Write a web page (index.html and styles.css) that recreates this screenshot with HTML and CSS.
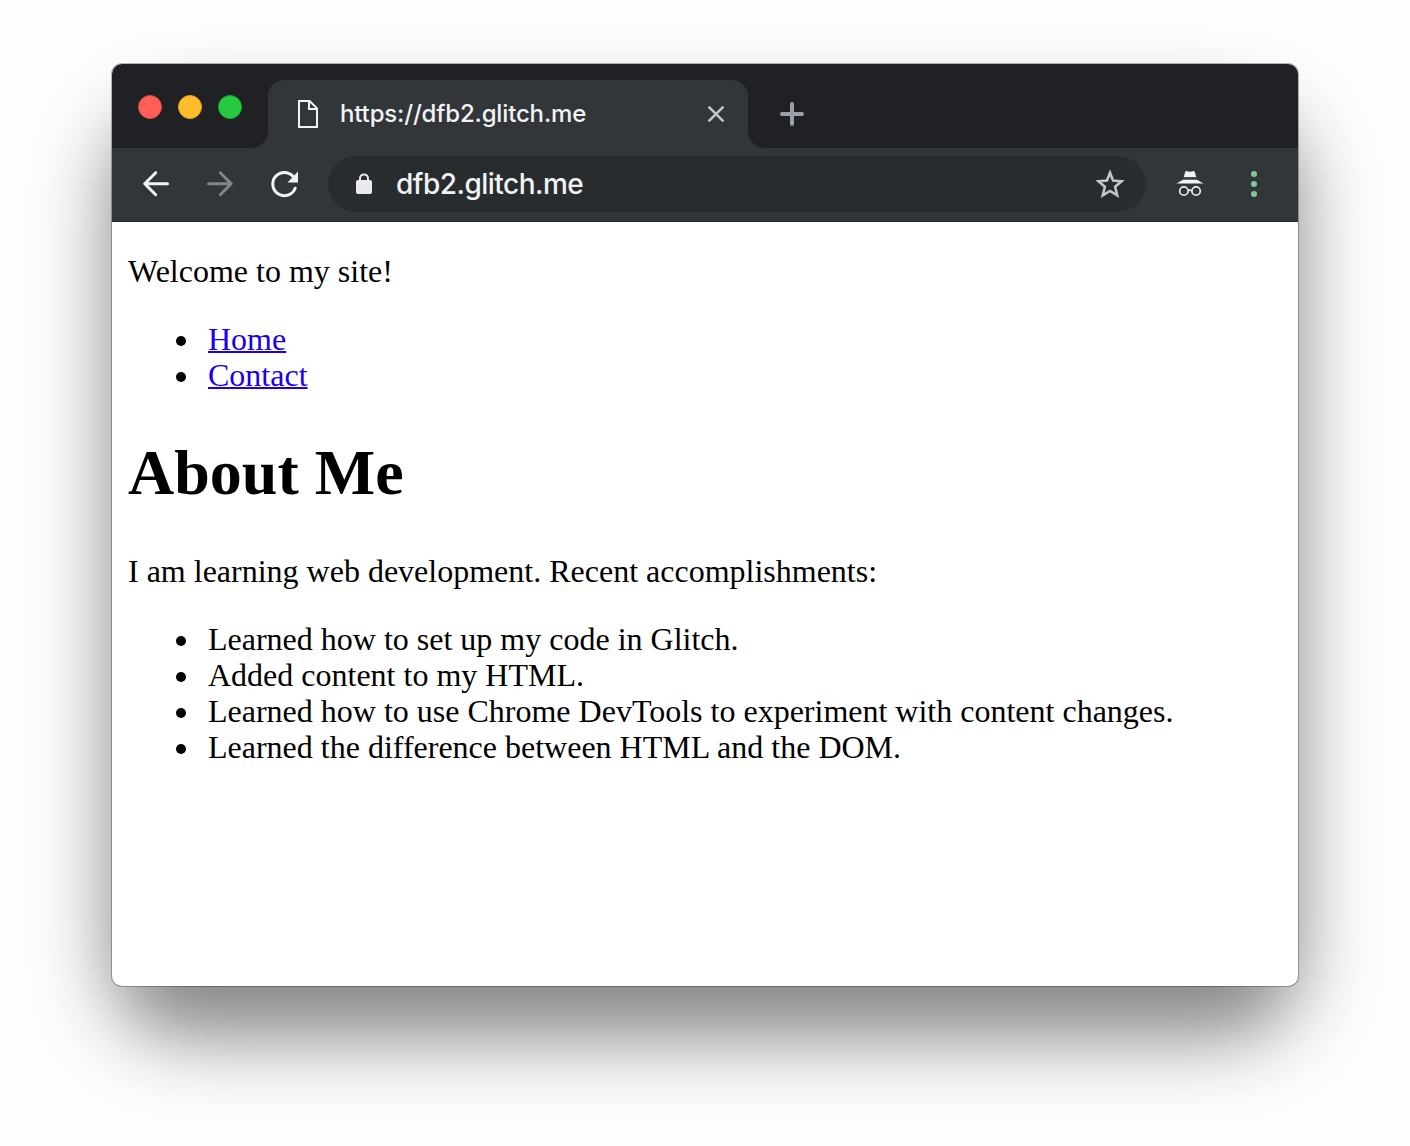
FILE: index.html
```html
<!DOCTYPE html>
<html lang="en">
<head>
<meta charset="utf-8">
<title>dfb2.glitch.me</title>
<link rel="stylesheet" href="styles.css">
</head>
<body>
<main class="window">
  <div class="tabstrip">
    <div class="lights">
      <span class="light light-close"></span>
      <span class="light light-min"></span>
      <span class="light light-max"></span>
    </div>
    <div class="tab">
      <svg class="file-icon" width="20" height="28" viewBox="0 0 20 28" fill="none" stroke="#f1f3f4" stroke-width="2"><path d="M1 1h10.600l7.400 7.400V27H1z"/><path d="M11 1v8h8"/></svg>
      <span class="tab-title">https://dfb2.glitch.me</span>
      <svg class="tab-close" width="16" height="16" viewBox="0 0 16 16" fill="none" stroke="#c4c6c7" stroke-width="2.600" stroke-linecap="round"><path d="M1.300 1.300l13.400 13.400M14.700 1.300L1.300 14.700"/></svg>
    </div>
    <svg class="new-tab" width="24" height="24" viewBox="0 0 24 24" fill="none" stroke="#9aa0a6" stroke-width="4" stroke-linecap="round"><path d="M12 2v20M2 12h20"/></svg>
  </div>
  <div class="toolbar">
    <svg class="nav" width="32" height="32" viewBox="0 0 32 32" fill="none" stroke="#f1f3f4" stroke-width="3" stroke-linecap="round" stroke-linejoin="round"><path d="M27.500 15.700H5M15.700 4.700L4.700 15.700L15.700 26.700"/></svg>
    <svg class="nav" width="32" height="32" viewBox="0 0 32 32" fill="none" stroke="#828586" stroke-width="3" stroke-linecap="round" stroke-linejoin="round"><path d="M4.500 15.700H27M16.300 4.700L27.300 15.700L16.300 26.700"/></svg>
    <svg class="nav" width="32" height="32" viewBox="0 0 32 32"><path d="M27.200 20.200A11.600 11.600 0 1 1 25.200 8.500" fill="none" stroke="#f1f3f4" stroke-width="3" stroke-linecap="round"/><path d="M30 3.500V14.500H19.500z" fill="#f1f3f4"/></svg>
    <div class="omnibox">
      <svg class="lock" width="16" height="22" viewBox="0 0 16 22"><path d="M4 8V5.400a4 4 0 0 1 8 0V8" fill="none" stroke="#e8eaed" stroke-width="2"/><rect y="7" width="16" height="14" rx="2" fill="#e8eaed"/></svg>
      <span class="address">dfb2.glitch.me</span>
      <svg class="star" width="30" height="30" viewBox="0 0 30 30" fill="none" stroke="#c3c6c8" stroke-width="2.600"><path d="M15 3.800L18.100 11.600L26.500 12.300L20.100 17.800L22.200 26.300L15 21.900L7.800 26.300L9.900 17.800L3.500 12.300L11.900 11.600Z"/></svg>
    </div>
    <svg class="incognito" width="28" height="26" viewBox="0 0 28 26"><path d="M7.800 6L9.300 .4Q9.600-.1 10.300-.1Q14 1.500 17.700-.1Q18.400-.1 18.700 .4L20.200 6z" fill="#f1f3f4"/><path d="M7 8.700h14L27.500 12.500H.5z" fill="#f1f3f4"/><path d="M7.500 6.300h13l.6 1H6.900z" fill="#55595b"/><g fill="none" stroke="#e8eaed" stroke-width="1.700"><circle cx="7.900" cy="20" r="4.200"/><circle cx="20.100" cy="20" r="4.200"/><path d="M12 19.700q2-1 4 0"/></g></svg>
    <svg class="menu" width="6" height="26" viewBox="0 0 6 26" fill="#81c995"><circle cx="3" cy="3" r="3"/><circle cx="3" cy="13" r="3"/><circle cx="3" cy="23" r="3"/></svg>
  </div>
  <div class="page">
    <p>Welcome to my site!</p>
    <ul>
      <li><a href="#">Home</a></li>
      <li><a href="#">Contact</a></li>
    </ul>
    <h1>About Me</h1>
    <p>I am learning web development. Recent accomplishments:</p>
    <ul>
      <li>Learned how to set up my code in Glitch.</li>
      <li>Added content to my HTML.</li>
      <li>Learned how to use Chrome DevTools to experiment with content changes.</li>
      <li>Learned the difference between HTML and the DOM.</li>
    </ul>
  </div>
</main>
</body>
</html>
```
FILE: styles.css
```css
* { box-sizing: border-box; }
body {
  margin: 0;
  height: 1146px;
  padding: 64px 112px 0;
  background: #fdfdfd;
  overflow: hidden;
}
svg { display: block; flex: none; overflow: visible; }
.window {
  position: relative;
  width: 1186px;
  height: 922px;
  display: flex;
  flex-direction: column;
  border-radius: 10px;
  background: #fff;
  box-shadow: 0 0 0 1px rgba(0, 0, 0, .28);
}
/* Soft drop shadow, rounder than the window itself */
.window::before {
  content: "";
  position: absolute;
  inset: 0;
  z-index: -1;
  border-radius: 70px;
  box-shadow: 0 50px 78px rgba(0, 0, 0, .48);
}
.tabstrip {
  height: 84px;
  display: flex;
  padding: 16px 0 0 26px;
  border-radius: 10px 10px 0 0;
  background: #202124;
}
.lights { display: flex; gap: 16px; width: 130px; padding-top: 15px; }
.light { width: 24px; height: 24px; border-radius: 50%; border: 1px solid; }
.light-close { background: #ff5f57; border-color: #e2463f; }
.light-min { background: #ffbd2e; border-color: #e1a116; }
.light-max { background: #28ca42; border-color: #12ac28; }
.tab {
  position: relative;
  width: 480px;
  height: 68px;
  display: flex;
  align-items: center;
  padding: 0 24px 0 30px;
  border-radius: 16px 16px 0 0;
  background: #323639;
}
.tab::before,
.tab::after {
  content: "";
  position: absolute;
  bottom: 0;
  width: 16px;
  height: 16px;
}
.tab::before { left: -16px; background: radial-gradient(circle at 0 0, transparent 15.500px, #323639 16.300px); }
.tab::after { right: -16px; background: radial-gradient(circle at 100% 0, transparent 15.500px, #323639 16.300px); }
.tab-title {
  flex: 1;
  margin-left: 22px;
  font: 500 24px/32px Inter, sans-serif;
  letter-spacing: -.16px;
  color: #f1f3f4;
}
.new-tab { margin: 22px 0 0 32px; }
.toolbar {
  height: 74px;
  display: flex;
  align-items: center;
  padding: 0 41px 2px 28px;
  background: #323639;
  border-bottom: 1px solid #27292b;
}
.nav { margin-right: 32px; }
.omnibox {
  width: 818px;
  height: 56px;
  display: flex;
  align-items: center;
  margin-left: -4px;
  padding: 0 21px 0 28px;
  border-radius: 28px;
  background: #282c2f;
}
.address {
  flex: 1;
  margin-left: 24px;
  font: 500 28px/36px Inter, sans-serif;
  letter-spacing: -.52px;
  color: #f1f3f4;
}
.incognito { margin-left: 30px; }
.menu { margin-left: auto; }
.page {
  flex: 1;
  padding: 31px 16px 0;
  font: 32px/36px "Liberation Serif", serif;
  color: #000;
}
.page p { margin: 0 0 32px; }
.page ul { margin: 0; padding-left: 80px; list-style: none; }
.page li::before {
  content: "";
  display: inline-block;
  width: 10px;
  height: 10px;
  margin: 0 22px 0 -32px;
  border-radius: 50%;
  background: #000;
  vertical-align: 4px;
}
.page h1 { margin: 43px 0; font-size: 64px; line-height: 74px; }
.page a { color: #1a00ee; text-decoration-thickness: 2px; }
```
